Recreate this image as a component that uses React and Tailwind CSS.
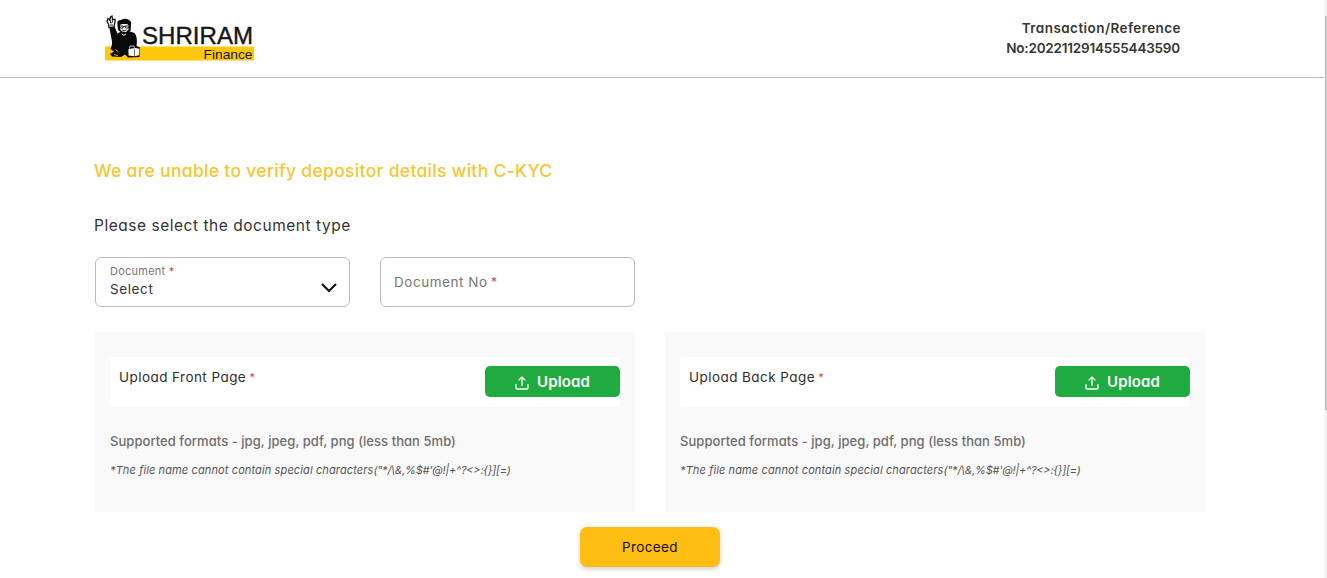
function Logo() {
  return (
    <svg className="block h-[48px] w-[150px]" viewBox="105 14 150 48" role="img" aria-label="Shriram Finance">
      <rect x="105" y="46.5" width="149" height="14" fill="#fdc70c" />
      <path d="M109.500 28 L114.500 26.500 L117.500 33.500 L121 31.500 L130 31.500 L134.500 33 Q138 37 136.500 46 L140 47.500 L139.500 57 L128 57.500 L125 54.500 L121 57 L112 56.500 L110 54 L114 51.500 L110.500 49 Q113 43 111.500 39 Z" fill="#090909" />
      <path d="M109 27.500 L108.500 24 L107 21.500 L108 18.500 L109.800 20 L110.500 17 L112 16 L112.500 19.500 L115 19.500 L115 22 L114 27 Z" fill="#fff" stroke="#111" strokeWidth="1.300" />
      <path d="M110 22.500l2 .5M110.500 20v3M112.500 20.500v2M110 25h3" stroke="#111" strokeWidth="0.900" />
      <path d="M117.500 25 Q116.500 20 121 20 Q125 17.500 129 20 Q132 21.500 131 25 L130.500 31 L126.500 33.500 L122 33 L118 30 Z" fill="#090909" />
      <path d="M120 25 L122 24 L127 24 L128.800 25.500 L128.500 29.500 L126 32 L122 31.500 L120 29 Z" fill="#fff" />
      <path d="M119.500 26h3.500v2h-3zM125 26h4v2h-3.500zM123 26.500h2M122 30q2 1.300 4.500 0" fill="none" stroke="#111" strokeWidth="0.900" />
      <path d="M122 33.500l1.500 2 2.500-1.500" fill="none" stroke="#fff" strokeWidth="1" />
      <path d="M128.500 49l7-1 4 .800-.500 6.500-4.500 1-6-.800z" fill="#fff" />
      <path d="M134.500 49v7" stroke="#111" strokeWidth="0.600" />
      <path d="M129.500 48.500l.500-2.500h4l.500 2" fill="none" stroke="#eee" strokeWidth="0.800" />
      <path d="M115.500 49.500l3 2.500M114 54.500l4 1" stroke="#fdc70c" strokeWidth="0.900" />
      <text x="142" y="44" textLength="111" lengthAdjust="spacingAndGlyphs" fontSize="24" fill="#161616" stroke="#161616" strokeWidth="0.400" fontFamily="'Liberation Sans', Arial, sans-serif">SHRIRAM</text>
      <text x="203.500" y="58.500" textLength="49" lengthAdjust="spacingAndGlyphs" fontSize="13" fill="#161616" fontFamily="'Liberation Sans', Arial, sans-serif">Finance</text>
    </svg>
  );
}

function UploadIcon() {
  return (
    <svg className="mt-[3px] h-[14px] w-[14px]" viewBox="0 0 14 14" fill="none" stroke="#fff" strokeWidth="1.300" strokeLinecap="round" strokeLinejoin="round">
      <path d="M1 8.500v3.300q0 1.200 1.200 1.200h9.600q1.200 0 1.200-1.200V8.500M7 9.500V1M4 4l3-3 3 3" />
    </svg>
  );
}

function UploadCard({ title }) {
  return (
    <section className="h-[180px] w-[540px] bg-[#f9f9f9] px-[15px] pt-[25px]">
      <div className="flex h-[50px] justify-between rounded-[3px] bg-white pl-[9px]">
        <div className="pt-[10px] text-[13.5px] leading-[20px] tracking-[0.44px] text-[#2e2e2e]">
          {title} <span className="relative top-[-1px] -ml-[1px] text-[11px] text-[#d9463f]">*</span>
        </div>
        <button className="mt-[9px] flex h-[31px] w-[135px] items-center justify-center gap-[8px] rounded-[5px] bg-[#1fab40] text-[15px] font-semibold text-white">
          <UploadIcon />
          <span className="pt-[2px] tracking-[0.1px]">Upload</span>
        </button>
      </div>
      <p className="mt-[24px] text-[13px] font-medium leading-[20px] tracking-[0.05px] text-[#6e6e6e]">
        Supported formats - jpg, jpeg, pdf, png (less than 5mb)
      </p>
      <p className="mt-[9px] whitespace-nowrap text-[11px] italic leading-[20px] tracking-[0.12px] text-[#555]">
        *The file name cannot contain special characters
        <span className="tracking-[-0.24px]">{"(\"*/\\&,%$#'@!|+^?<>:{}][=)"}</span>
      </p>
    </section>
  );
}

export default function App() {
  return (
    <div className="flex h-[578px] w-[1327px] overflow-hidden bg-white font-['Inter',sans-serif] [font-feature-settings:'cv11','calt'_0]">
      <div className="w-[1324px]">
        <header className="flex h-[78px] justify-between border-b border-[#b9bcbc] pl-[105px] pr-[143px] pt-[14px]">
          <Logo />
          <div className="mt-[4px] text-right text-[13.5px] font-semibold leading-[20px] text-[#363636]">
            <div className="tracking-[0.43px]">Transaction/Reference</div>
            <div className="pr-[1px] tracking-[-0.2px]">No:2022112914555443590</div>
          </div>
        </header>
        <main className="ml-[95px] w-[1110px] pt-[80px]">
          <h1 className="-ml-[1px] text-[17.5px] font-medium leading-[26px] tracking-[0.32px] text-[#f9c530]">We are unable to verify depositor details with C-KYC</h1>
          <h2 className="-ml-[1px] mt-[30px] text-[15.5px] font-normal leading-[24px] tracking-[0.53px] text-[#333]">Please select the document type</h2>
          <div className="mt-[19px] flex gap-[30px]">
            <div className="flex h-[50px] w-[255px] items-center justify-between rounded-[6px] border border-[#bbb] pl-[14px] pr-[12px]">
              <div className="-mt-[2px]">
                <div className="text-[11px] leading-[14px] tracking-[0.25px] text-[#777]">Document <span className="text-[#d9463f]">*</span></div>
                <div className="mt-[1px] text-[13.5px] leading-[20px] tracking-[0.6px] text-[#333]">Select</div>
              </div>
              <svg className="mt-[12px] h-[10px] w-[16px]" viewBox="0 0 16 10" fill="none" stroke="#111" strokeWidth="2.200">
                <path d="M1 1l7 7 7-7" />
              </svg>
            </div>
            <div className="flex h-[50px] w-[255px] items-center rounded-[6px] border border-[#bbb] pl-[13px] text-[13.5px] tracking-[0.55px] text-[#777]">
              <span>Document No <span className="relative top-[-1px] -ml-[1px] text-[12px] text-[#d9463f]">*</span></span>
            </div>
          </div>
          <div className="mt-[25px] flex gap-[30px]">
            <UploadCard title="Upload Front Page" />
            <UploadCard title="Upload Back Page" />
          </div>
          <div className="mt-[15px] flex justify-center">
            <button className="h-[40px] w-[140px] rounded-[7px] bg-[#fdbd13] text-[13.5px] tracking-[0.4px] text-[#160c00] shadow-[0_2px_5px_rgba(0,0,0,0.2)]">Proceed</button>
          </div>
        </main>
      </div>
      <div className="flex w-[3px] justify-end bg-[#f3f3f3] pt-[16px]">
        <div className="h-[394px] w-[2px] bg-[#c3c3c3]" />
      </div>
    </div>
  );
}
